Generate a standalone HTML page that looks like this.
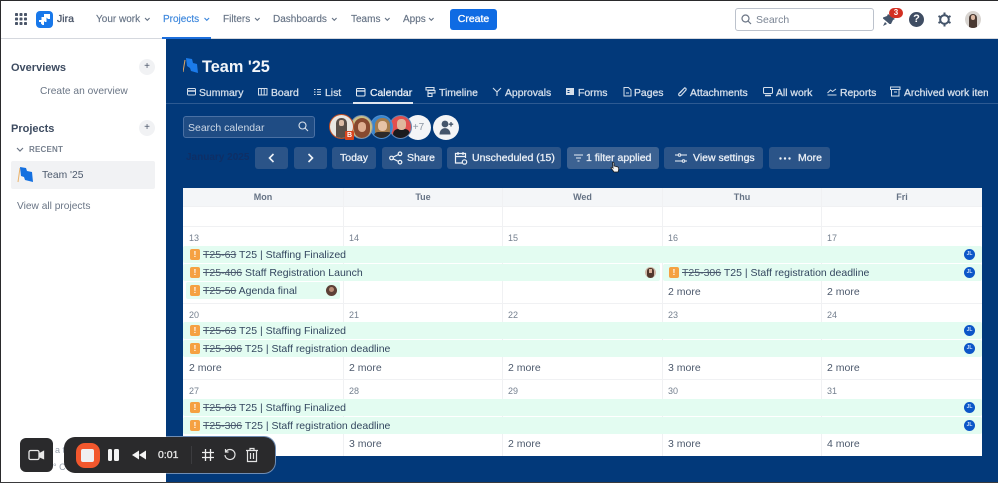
<!DOCTYPE html>
<html><head><meta charset="utf-8"><style>
*{box-sizing:border-box}
html,body{margin:0;padding:0;width:998px;height:483px;overflow:hidden;background:#fff;font-family:"Liberation Sans",sans-serif}
#w{position:absolute;left:0;top:0;width:998px;height:483px;overflow:hidden;filter:blur(.3px)}
.a{position:absolute;white-space:nowrap}
.n{font-size:10px;color:#667385;top:14px;line-height:12px;-webkit-text-stroke:.15px}
.t{font-size:10.4px;color:#d4deea;top:87px;line-height:13px;-webkit-text-stroke:.3px}
.b{position:absolute;top:147px;height:22px;background:#2b5488;border-radius:3px;color:#e9eef5;font-size:10.5px;-webkit-text-stroke:.3px;line-height:22px;white-space:nowrap}
.h{position:absolute;top:192px;font-size:9px;font-weight:bold;color:#667385;line-height:11px;text-align:center}
.d{position:absolute;font-size:9px;color:#75808f;line-height:11px}
.bar{position:absolute;background:#e3fcf1;border-radius:2px}
.ic{position:absolute;width:10px;height:11px;background:#f5a142;border-radius:2px;color:#fff;font-size:8px;font-weight:bold;line-height:11px;text-align:center}
.x{position:absolute;font-size:10.5px;color:#33465f;line-height:12px;white-space:nowrap}
.x s{color:#4a596e}
.m{position:absolute;font-size:10.5px;color:#4c596c;line-height:12px;white-space:nowrap}
.j{position:absolute;width:11px;height:11px;border-radius:50%;background:#0b56c8;color:#cfe0fa;font-size:5px;line-height:11px;text-align:center;font-weight:bold}
.l{position:absolute;background:#f0f1f3}
</style></head><body><div id="w">
<!-- top nav -->
<div class="a" style="left:0;top:38px;width:998px;height:1px;background:#d5d8de"></div>
<svg class="a" style="left:15px;top:13px" width="12" height="12" fill="#4a5568"><rect width="3" height="3" rx=".8"/><rect x="4.500" width="3" height="3" rx=".8"/><rect x="9" width="3" height="3" rx=".8"/><rect y="4.500" width="3" height="3" rx=".8"/><rect x="4.500" y="4.500" width="3" height="3" rx=".8"/><rect x="9" y="4.500" width="3" height="3" rx=".8"/><rect y="9" width="3" height="3" rx=".8"/><rect x="4.500" y="9" width="3" height="3" rx=".8"/><rect x="9" y="9" width="3" height="3" rx=".8"/></svg>
<div class="a" style="left:36px;top:11px;width:17px;height:17px;background:#1878ea;border-radius:4px"></div>
<svg class="a" style="left:39px;top:14px" width="11" height="11" fill="#fff"><path d="M5 0h6v5H9L7 3H5zM2.500 3h5v5H6L4.500 6.500H2.500zM0 6h5v5H3.500L2 9.500V8H0z"/></svg>
<div class="a" style="left:57px;top:13px;font-size:10.500px;line-height:13px;color:#4a5568;-webkit-text-stroke:.3px">Jira</div>
<div class="a n" style="left:96px">Your work</div>
<div class="a n" style="left:163px;color:#3b86dc">Projects</div>
<div class="a" style="left:162px;top:37px;width:49px;height:2px;background:#1d6fdc"></div>
<div class="a n" style="left:223px">Filters</div>
<div class="a n" style="left:273px">Dashboards</div>
<div class="a n" style="left:351px">Teams</div>
<div class="a n" style="left:403px">Apps</div>
<svg class="a" style="left:0;top:0" width="450" height="30" fill="none" stroke="#667385" stroke-width="1.100"><path d="M145 18l2.300 2.300 2.300-2.300M255 18l2.300 2.300 2.300-2.300M332 18l2.300 2.300 2.300-2.300M385 18l2.300 2.300 2.300-2.300M429 18l2.300 2.300 2.300-2.300"/><path d="M204.500 18l2.300 2.300 2.300-2.300" stroke="#3b86dc"/></svg>
<div class="a" style="left:450px;top:9px;width:47px;height:21px;background:#0f6be3;border-radius:3px;color:#fff;font-size:10.500px;-webkit-text-stroke:.3px;line-height:21px;text-align:center">Create</div>
<div class="a" style="left:735px;top:8px;width:139px;height:23px;border:1px solid #bcc2cc;border-radius:3px;background:#fff"></div>
<svg class="a" style="left:741px;top:14px" width="11" height="11" fill="none" stroke="#6b7585" stroke-width="1.200"><circle cx="4.500" cy="4.500" r="3.500"/><path d="M7 7l3 3"/></svg>
<div class="a" style="left:756px;top:14px;font-size:10.500px;line-height:12px;color:#7a8493">Search</div>
<svg class="a" style="left:882px;top:13px" width="14" height="14" fill="#44546a"><path d="M6 1l7 5-2 1-2 4-1.500 0L1 5.500V4.500L5 3z"/><path d="M3 9L1 13l4-2z"/></svg>
<div class="a" style="left:889px;top:8px;width:14px;height:10px;border-radius:5px;background:#d32f22;color:#fff;font-size:8px;font-weight:bold;line-height:10px;text-align:center">3</div>
<div class="a" style="left:909px;top:12px;width:15px;height:15px;border-radius:50%;background:#3f4d63;color:#fff;font-size:11px;font-weight:bold;line-height:15px;text-align:center">?</div>
<svg class="a" style="left:937px;top:12px" width="15" height="15" fill="none" stroke="#44546a"><circle cx="7.500" cy="7.500" r="4.300" stroke-width="2"/><path d="M7.500 0.500v2.500M7.500 12v2.500M1.500 4l2 1.200M11.500 9.800l2 1.200M1.500 11l2-1.200M11.500 5.200l2-1.200" stroke-width="2"/></svg>
<div class="a" style="left:965px;top:11px;width:16px;height:17px;border-radius:50%;background:#d8d4d0;overflow:hidden"><div style="position:absolute;left:4px;top:3px;width:8px;height:14px;background:#4a3a33;border-radius:4px 4px 0 0"></div><div style="position:absolute;left:6px;top:4px;width:4px;height:5px;background:#dcb9a4;border-radius:2px"></div></div>

<!-- sidebar -->
<div class="a" style="left:11px;top:61px;font-size:11px;line-height:14px;font-weight:bold;color:#3d4b60">Overviews</div>
<div class="a" style="left:139px;top:59px;width:16px;height:16px;border-radius:50%;background:#f1f2f4;color:#4a5568;font-size:10px;line-height:15px;text-align:center">+</div>
<div class="a" style="left:40px;top:86px;font-size:10.200px;line-height:12px;color:#6a7585">Create an overview</div>
<div class="a" style="left:11px;top:122px;font-size:11px;line-height:14px;font-weight:bold;color:#3d4b60">Projects</div>
<div class="a" style="left:139px;top:120px;width:16px;height:16px;border-radius:50%;background:#f1f2f4;color:#4a5568;font-size:10px;line-height:15px;text-align:center">+</div>
<svg class="a" style="left:16px;top:147px" width="8" height="6" fill="none" stroke="#6b7585" stroke-width="1.200"><path d="M1 1l3 3 3-3"/></svg>
<div class="a" style="left:29px;top:145px;font-size:8px;line-height:10px;font-weight:bold;color:#77818f;letter-spacing:.2px">RECENT</div>
<div class="a" style="left:11px;top:161px;width:144px;height:28px;background:#f1f2f4;border-radius:2px"></div>
<svg class="a" style="left:17px;top:166px" width="17" height="18"><path d="M3 2l-2 14" stroke="#eab36a" stroke-width="1"/><path d="M3 1l6 1 1 3 5 1 1 10-8-2-1-3-3-1z" fill="#1470e0"/></svg>
<div class="a" style="left:42px;top:170px;font-size:10.300px;line-height:12px;color:#4c596c">Team '25</div>
<div class="a" style="left:17px;top:201px;font-size:10.200px;line-height:12px;color:#6a7585">View all projects</div>

<!-- main -->
<div class="a" style="left:166px;top:39px;width:832px;height:444px;background:#02397a"></div>
<svg class="a" style="left:183px;top:57px" width="16" height="18"><path d="M2 3L0 15" stroke="#e3a860" stroke-width="1"/><path d="M3 1l6 1 1 4 4 1 1 9-7-2-1-3-3-2z" fill="#1b7bea"/></svg>
<div class="a" style="left:202px;top:57px;font-size:16.300px;line-height:20px;font-weight:bold;color:#f2f5f9">Team '25</div>

<svg class="a" style="left:187px;top:87px" width="10" height="10" fill="none" stroke="#d4deea" stroke-width="1"><rect x=".5" y="1.500" width="8" height="6.500" rx="1"/><path d="M1 4h7" stroke-width="1.500"/></svg>
<div class="a t" style="left:199px">Summary</div>
<svg class="a" style="left:258px;top:87px" width="10" height="10" fill="none" stroke="#d4deea" stroke-width="1"><rect x=".5" y="1.500" width="8.500" height="6.500"/><path d="M3.300 1.500v6.500M6.200 1.500v6.500"/></svg>
<div class="a t" style="left:271px">Board</div>
<svg class="a" style="left:314px;top:88px" width="8" height="8" fill="#d4deea"><rect y="1" width="1.500" height="1"/><rect x="3" y="1" width="4" height="1"/><rect y="3.500" width="1.500" height="1"/><rect x="3" y="3.500" width="4" height="1"/><rect y="6" width="1.500" height="1"/><rect x="3" y="6" width="4" height="1"/></svg>
<div class="a t" style="left:325px">List</div>
<svg class="a" style="left:356px;top:87px" width="10" height="10" fill="none" stroke="#e8edf4" stroke-width="1"><rect x=".5" y="1.500" width="8.500" height="7.500" rx="1"/><path d="M1 4h7.500" stroke-width="1.300"/></svg>
<div class="a t" style="left:370px;color:#e8edf4">Calendar</div>
<svg class="a" style="left:425px;top:86px" width="11" height="12" fill="none" stroke="#d4deea" stroke-width="1.100"><path d="M1 1.500h8v2.500H1zM3 4.500h7v2.500H3zM3 7.500h4v3H3z"/></svg>
<div class="a t" style="left:439px">Timeline</div>
<svg class="a" style="left:492px;top:87px" width="10" height="10" fill="none" stroke="#d4deea" stroke-width="1.100"><path d="M1 1l4 4 4-4M5 5v4"/></svg>
<div class="a t" style="left:505px">Approvals</div>
<svg class="a" style="left:566px;top:87px" width="9" height="10" fill="#d4deea"><rect x="0" y="1" width="8" height="7"/><rect x="1.500" y="3" width="2" height="1" fill="#02397a"/><rect x="1.500" y="5" width="2" height="1" fill="#02397a"/></svg>
<div class="a t" style="left:578px">Forms</div>
<svg class="a" style="left:623px;top:87px" width="9" height="10" fill="none" stroke="#d4deea"><path d="M1 .5h4.500l2.500 2.500v6H1zM3 6h3"/></svg>
<div class="a t" style="left:634px">Pages</div>
<svg class="a" style="left:677px;top:86px" width="10" height="11" fill="none" stroke="#d4deea" stroke-width="1.200"><path d="M8 1.500L2 7.500c-1 2 1 3 2.500 1.500l4.500-5c.5-2-1-2.500-2-1.500L3 7"/></svg>
<div class="a t" style="left:690px">Attachments</div>
<svg class="a" style="left:763px;top:87px" width="10" height="10" fill="none" stroke="#d4deea" stroke-width="1.100"><rect x=".5" y=".5" width="9" height="6" rx="1"/><path d="M2 8.500h6" stroke-width="1.500"/></svg>
<div class="a t" style="left:776px">All work</div>
<svg class="a" style="left:827px;top:87px" width="10" height="9" fill="none" stroke="#d4deea"><path d="M.5 8h9M.5 6l3-3 2 1.500L9 2"/></svg>
<div class="a t" style="left:840px">Reports</div>
<svg class="a" style="left:890px;top:86px" width="11" height="11" fill="none" stroke="#d4deea"><rect x=".5" y="1" width="9.500" height="2.500"/><path d="M1.500 3.500V10h7.500V3.500M4 6h3"/></svg>
<div class="a t" style="left:904px;width:84px;overflow:hidden">Archived work item</div>
<div class="a" style="left:166px;top:103px;width:832px;height:1px;background:#2d5a92"></div>
<div class="a" style="left:353px;top:102px;width:60px;height:2px;background:#dfe6ef"></div>

<!-- search calendar -->
<div class="a" style="left:183px;top:116px;width:132px;height:22px;background:#1f4c84;border:1px solid #4a70a3;border-radius:3px"></div>
<div class="a" style="left:188px;top:122px;font-size:10.500px;line-height:12px;color:#cdd8e6">Search calendar</div>
<svg class="a" style="left:298px;top:121px" width="11" height="11" fill="none" stroke="#d6dfea" stroke-width="1.100"><circle cx="4.500" cy="4.500" r="3.500"/><path d="M7 7l3 3"/></svg>

<!-- avatars -->
<div class="a" style="left:405px;top:115px;width:26px;height:25px;border-radius:50%;background:#f4f5f7;color:#8b95a3;font-size:10px;line-height:25px;text-align:center;padding-left:1px">+7</div>
<div class="a" style="left:389px;top:115px;width:23px;height:24px;border-radius:50%;background:#e2504f;border:1px solid #5f86b5;overflow:hidden"><div style="position:absolute;left:3px;top:13px;width:17px;height:10px;background:#1b1a1e;border-radius:6px"></div><div style="position:absolute;left:7px;top:3px;width:9px;height:11px;background:#dfb79d;border-radius:4px"></div></div>
<div class="a" style="left:370px;top:115px;width:23px;height:24px;border-radius:50%;background:#3a86cc;border:1px solid #4f8ed0;overflow:hidden"><div style="position:absolute;left:4px;top:2px;width:15px;height:20px;background:#a47b4b;border-radius:7px"></div><div style="position:absolute;left:7px;top:5px;width:9px;height:10px;background:#e6c2a6;border-radius:4px"></div><div style="position:absolute;left:3px;top:16px;width:18px;height:8px;background:#2d2a2a;border-radius:5px"></div></div>
<div class="a" style="left:350px;top:115px;width:23px;height:24px;border-radius:50%;background:#c8bf86;border:1px solid #7f93ae;overflow:hidden"><div style="position:absolute;left:3px;top:2px;width:16px;height:20px;background:#87492f;border-radius:8px"></div><div style="position:absolute;left:7px;top:6px;width:8px;height:10px;background:#dfae90;border-radius:4px"></div></div>
<div class="a" style="left:329px;top:114px;width:25px;height:25px;border-radius:50%;background:#e9e6e2;border:1.500px solid #bd4d24;overflow:hidden"><div style="position:absolute;left:6px;top:3px;width:11px;height:20px;background:#5a4e48;border-radius:5px 5px 0 0"></div><div style="position:absolute;left:9px;top:5px;width:5px;height:6px;background:#dcbba6;border-radius:2px"></div></div>
<div class="a" style="left:345px;top:131px;width:9px;height:9px;background:#d9441d;border-radius:1px;color:#fff;font-size:7px;font-weight:bold;line-height:9px;text-align:center">B</div>
<div class="a" style="left:433px;top:115px;width:26px;height:25px;border-radius:50%;background:#f3f4f6"></div>
<svg class="a" style="left:438px;top:120px" width="17" height="15" fill="#44546a"><circle cx="7" cy="4" r="3.400"/><path d="M1.500 14.500c0-8.500 11-8.500 11 0z"/><path d="M13 2v4.500M10.800 4.200h4.400" stroke="#44546a" stroke-width="1.300"/></svg>

<!-- toolbar -->
<div class="a" style="left:186px;top:152px;font-size:10px;line-height:11px;color:#0e2f66;font-weight:bold">January 2025</div>
<div class="b" style="left:255px;width:33px"><svg class="a" style="left:12px;top:6px" width="9" height="10" fill="none" stroke="#eef2f7" stroke-width="1.600"><path d="M6.500 1L2.500 5l4 4"/></svg></div>
<div class="b" style="left:294px;width:33px"><svg class="a" style="left:12px;top:6px" width="9" height="10" fill="none" stroke="#eef2f7" stroke-width="1.600"><path d="M2.500 1l4 4-4 4"/></svg></div>
<div class="b" style="left:332px;width:44px;text-align:center">Today</div>
<div class="b" style="left:382px;width:60px;padding-left:25px"><svg class="a" style="left:7px;top:4px" width="14" height="14" fill="none" stroke="#eef2f7" stroke-width="1.200"><circle cx="2.500" cy="7" r="1.800"/><circle cx="11" cy="2.800" r="1.800"/><circle cx="11" cy="11.200" r="1.800"/><path d="M4 6.200l5.500-2.700M4 7.800l5.500 2.700"/></svg>Share</div>
<div class="b" style="left:447px;width:114px;padding-left:25px"><svg class="a" style="left:7px;top:4px" width="14" height="15" fill="none" stroke="#eef2f7" stroke-width="1.200"><path d="M8 12H1.500V2.500h10V7M1.500 5.500h10M4 1v3M9 1v3"/><circle cx="10.500" cy="11" r="2.200" fill="#2b5488"/></svg>Unscheduled (15)</div>
<div class="b" style="left:567px;width:92px;padding-left:19px;background:#3c6292"><svg class="a" style="left:7px;top:7px" width="9" height="8" fill="none" stroke="#e9eef5"><path d="M0 1h9M2 4h5M3.500 7h2"/></svg>1 filter applied</div>
<div class="b" style="left:664px;width:99px;padding-left:29px"><svg class="a" style="left:11px;top:5px" width="12" height="12" fill="none" stroke="#eef2f7" stroke-width="1"><path d="M0 3h3M6 3h6M0 9h7M10 9h2"/><circle cx="4.500" cy="3" r="1.300"/><circle cx="8.500" cy="9" r="1.300"/></svg>View settings</div>
<div class="b" style="left:769px;width:61px;padding-left:29px"><svg class="a" style="left:10px;top:10px" width="13" height="3" fill="#eef2f7"><circle cx="1.500" cy="1.500" r="1.200"/><circle cx="6" cy="1.500" r="1.200"/><circle cx="10.500" cy="1.500" r="1.200"/></svg>More</div>
<svg class="a" style="left:610px;top:161px;z-index:5" width="10" height="12"><path d="M2.500 1.500c1-.8 1.500 0 1.500 1V5l4 1c1 1 .8 3 0 5H4L1 7c0-1 1-1 2 0z" fill="#f4f4f4" stroke="#1c1c1c" stroke-width=".8"/></svg>

<!-- calendar -->
<div class="a" style="left:183px;top:188px;width:799px;height:268px;background:#fff"></div>
<div class="a" style="left:183px;top:188px;width:799px;height:19px;background:#f4f6f8"></div>
<div class="h" style="left:183px;width:160px">Mon</div>
<div class="h" style="left:343px;width:160px">Tue</div>
<div class="h" style="left:503px;width:159px">Wed</div>
<div class="h" style="left:662px;width:160px">Thu</div>
<div class="h" style="left:822px;width:160px">Fri</div>
<div class="l" style="left:343px;top:188px;width:1px;height:268px"></div>
<div class="l" style="left:502px;top:188px;width:1px;height:268px"></div>
<div class="l" style="left:662px;top:188px;width:1px;height:268px"></div>
<div class="l" style="left:821px;top:188px;width:1px;height:268px"></div>
<div class="l" style="left:183px;top:206px;width:799px;height:1px"></div>
<div class="l" style="left:183px;top:226px;width:799px;height:1px"></div>
<div class="l" style="left:183px;top:303px;width:799px;height:1px"></div>
<div class="l" style="left:183px;top:379px;width:799px;height:1px"></div>

<div class="d" style="left:189px;top:233px">13</div><div class="d" style="left:349px;top:233px">14</div><div class="d" style="left:508px;top:233px">15</div><div class="d" style="left:668px;top:233px">16</div><div class="d" style="left:827px;top:233px">17</div>
<div class="d" style="left:189px;top:310px">20</div><div class="d" style="left:349px;top:310px">21</div><div class="d" style="left:508px;top:310px">22</div><div class="d" style="left:668px;top:310px">23</div><div class="d" style="left:827px;top:310px">24</div>
<div class="d" style="left:189px;top:386px">27</div><div class="d" style="left:349px;top:386px">28</div><div class="d" style="left:508px;top:386px">29</div><div class="d" style="left:668px;top:386px">30</div><div class="d" style="left:827px;top:386px">31</div>

<!-- week 1 -->
<div class="bar" style="left:183px;top:246px;width:799px;height:17px"></div>
<div class="ic" style="left:190px;top:249px">!</div>
<div class="x" style="left:203px;top:249px"><s>T25-63</s> T25 | Staffing Finalized</div>
<div class="j" style="left:964px;top:249px">JL</div>
<div class="bar" style="left:183px;top:264px;width:477px;height:17px"></div>
<div class="ic" style="left:190px;top:267px">!</div>
<div class="x" style="left:203px;top:267px"><s>T25-406</s> Staff Registration Launch</div>
<div class="a" style="left:645px;top:267px;width:11px;height:11px;border-radius:50%;background:#cdb7a6;overflow:hidden"><div style="position:absolute;left:2px;top:1px;width:7px;height:10px;background:#50372c;border-radius:3px"></div><div style="position:absolute;left:4px;top:2px;width:3px;height:4px;background:#d9b29a"></div></div>
<div class="bar" style="left:663px;top:264px;width:319px;height:17px"></div>
<div class="ic" style="left:669px;top:267px">!</div>
<div class="x" style="left:682px;top:267px"><s>T25-306</s> T25 | Staff registration deadline</div>
<div class="j" style="left:964px;top:267px">JL</div>
<div class="bar" style="left:186px;top:282px;width:154px;height:17px"></div>
<div class="ic" style="left:190px;top:285px">!</div>
<div class="x" style="left:203px;top:285px"><s>T25-50</s> Agenda final</div>
<div class="a" style="left:326px;top:285px;width:11px;height:11px;border-radius:50%;background:#5c4036"><div style="position:absolute;left:3px;top:2px;width:5px;height:5px;background:#b98e77;border-radius:50%"></div></div>
<div class="m" style="left:668px;top:286px">2 more</div><div class="m" style="left:827px;top:286px">2 more</div>

<!-- week 2 -->
<div class="bar" style="left:183px;top:322px;width:799px;height:17px"></div>
<div class="ic" style="left:190px;top:325px">!</div>
<div class="x" style="left:203px;top:325px"><s>T25-63</s> T25 | Staffing Finalized</div>
<div class="j" style="left:964px;top:325px">JL</div>
<div class="bar" style="left:183px;top:340px;width:799px;height:17px"></div>
<div class="ic" style="left:190px;top:343px">!</div>
<div class="x" style="left:203px;top:343px"><s>T25-306</s> T25 | Staff registration deadline</div>
<div class="j" style="left:964px;top:343px">JL</div>
<div class="m" style="left:189px;top:362px">2 more</div><div class="m" style="left:349px;top:362px">2 more</div><div class="m" style="left:508px;top:362px">2 more</div><div class="m" style="left:668px;top:362px">3 more</div><div class="m" style="left:827px;top:362px">2 more</div>

<!-- week 3 -->
<div class="bar" style="left:183px;top:399px;width:799px;height:17px"></div>
<div class="ic" style="left:190px;top:402px">!</div>
<div class="x" style="left:203px;top:402px"><s>T25-63</s> T25 | Staffing Finalized</div>
<div class="j" style="left:964px;top:402px">JL</div>
<div class="bar" style="left:183px;top:417px;width:799px;height:17px"></div>
<div class="ic" style="left:190px;top:420px">!</div>
<div class="x" style="left:203px;top:420px"><s>T25-306</s> T25 | Staff registration deadline</div>
<div class="j" style="left:964px;top:420px">JL</div>
<div class="m" style="left:349px;top:438px">3 more</div><div class="m" style="left:508px;top:438px">2 more</div><div class="m" style="left:668px;top:438px">3 more</div><div class="m" style="left:827px;top:438px">4 more</div>

<!-- recorder -->
<div class="a" style="left:55px;top:445px;font-size:9px;line-height:11px;color:#9aa2ae">a t</div>
<div class="a" style="left:53px;top:462px;font-size:9px;line-height:11px;color:#9aa2ae">° C</div>
<div class="a" style="left:20px;top:438px;width:33px;height:34px;background:#2a2a2c;border-radius:6px"></div>
<svg class="a" style="left:28px;top:448px" width="18" height="14" fill="none" stroke="#e8e8e8" stroke-width="1.300"><rect x="1" y="2.500" width="10" height="9" rx="1.500"/><path d="M11 6l4.500-2.500v7L11 8.500" fill="#e8e8e8"/></svg>
<div class="a" style="left:64px;top:436px;width:212px;height:38px;background:#6f8db4;border-radius:12px;clip-path:inset(0 0 0 102px)"></div>
<div class="a" style="left:64px;top:437px;width:211px;height:36px;background:#2a2a2c;border-radius:11px"></div>
<div class="a" style="left:76px;top:443px;width:24px;height:25px;background:#f2572d;border-radius:9px"></div>
<div class="a" style="left:81px;top:449px;width:13px;height:13px;background:#efeff1;border-radius:2px"></div>
<div class="a" style="left:108px;top:449px;width:4px;height:12px;background:#f4f4f4;border-radius:1.500px"></div>
<div class="a" style="left:114px;top:449px;width:5px;height:12px;background:#f4f4f4;border-radius:1.500px"></div>
<svg class="a" style="left:131px;top:449px" width="16" height="12" fill="#f4f4f4"><path d="M1 6l7-4.500v9zM8 6l7-4.500v9z"/></svg>
<div class="a" style="left:158px;top:449px;font-size:10.500px;-webkit-text-stroke:.3px;line-height:12px;color:#e8e8e8">0:01</div>
<div class="a" style="left:191px;top:446px;width:1px;height:18px;background:#3c3c3f"></div>
<svg class="a" style="left:201px;top:448px" width="14" height="14" fill="none" stroke="#f0f0f0" stroke-width="1.300"><path d="M4.500 1v12M9.500 1v12M1 4.500h12M1 9.500h12"/></svg>
<svg class="a" style="left:223px;top:448px" width="14" height="14" fill="none" stroke="#e4e4e4" stroke-width="1.200"><path d="M3 3.500A5 5 0 1 1 2 7"/><path d="M2.500 1v3h3"/></svg>
<svg class="a" style="left:245px;top:447px" width="14" height="16" fill="none" stroke="#e4e4e4" stroke-width="1.200"><path d="M1 3.500h12M5 3V1.500h4V3M2.500 3.500V14.500h9V3.500M5.500 6v6M8.500 6v6"/></svg>

<!-- frame edges -->
<div class="a" style="left:0;top:0;width:998px;height:1px;background:#2a2a2c"></div>
<div class="a" style="left:0;top:0;width:1px;height:483px;background:#2a2a2c"></div>
<div class="a" style="left:0;top:482px;width:998px;height:1px;background:#3a3a3c"></div>
</div></body></html>
